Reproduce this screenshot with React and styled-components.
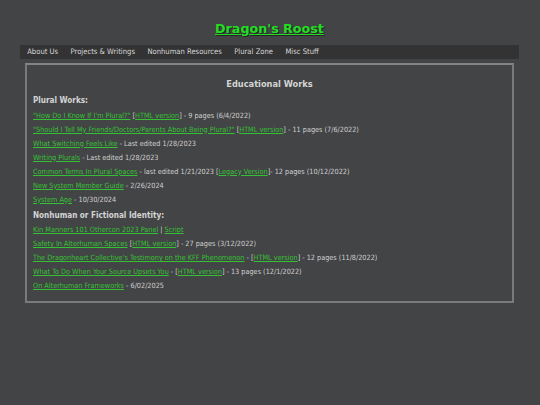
import styled, { createGlobalStyle } from 'styled-components';

const GlobalStyle = createGlobalStyle`
  html, body {
    margin: 0;
    padding: 0;
    background-color: #434446;
  }
  body {
    font-family: "DejaVu Sans Condensed", "DejaVu Sans", Verdana, sans-serif;
    font-stretch: condensed;
    color: #cfcfcf;
  }
`;

const Page = styled.div`
  min-height: 405px;
  padding: 0 21px 0 20px;
  box-sizing: border-box;
`;

const Title = styled.h1`
  margin: 0;
  padding: 21px 0 8px;
  text-align: center;
  font-size: 12.7px;
  line-height: 16px;
  font-weight: bold;
  font-stretch: normal;
  font-family: "DejaVu Sans", Verdana, sans-serif;
  a {
    color: #22de22;
    text-decoration: underline;
    text-shadow: 1px 1px 0 #262626;
  }
`;

const NavBar = styled.nav`
  display: flex;
  align-items: center;
  height: 14px;
  padding: 0 1px;
  background-color: #333334;
`;

const NavItem = styled.a`
  padding: 0 6.2px;
  font-size: 7.6px;
  line-height: 14px;
  color: #d6d6d6;
  text-decoration: none;
`;

const Box = styled.section`
  margin: 4px 5px 0;
  border: 2px solid #7a7a7a;
  border-top-color: #858585;
  padding: 11px 6px 8px;
`;

const SectionTitle = styled.h2`
  margin: 0;
  text-align: center;
  font-size: 9.2px;
  line-height: 16px;
  font-weight: bold;
  color: #d4d4d4;
`;

const GroupTitle = styled.h3`
  margin: 0;
  font-size: 8.1px;
  line-height: 16.6px;
  font-weight: bold;
  color: #d4d4d4;
`;

const Row = styled.div`
  font-size: 7.25px;
  line-height: 14px;
  color: #d0d0d0;
  white-space: nowrap;
`;

const Link = styled.a`
  color: #34c234;
  text-decoration: underline;
`;

const pluralWorks = [
  [{ link: '"How Do I Know If I\'m Plural?"' }, ' [', { link: 'HTML version' }, '] - 9 pages (6/4/2022)'],
  [{ link: '"Should I Tell My Friends/Doctors/Parents About Being Plural?"' }, ' [', { link: 'HTML version' }, '] - 11 pages (7/6/2022)'],
  [{ link: 'What Switching Feels Like' }, ' - Last edited 1/28/2023'],
  [{ link: 'Writing Plurals' }, ' - Last edited 1/28/2023'],
  [{ link: 'Common Terms In Plural Spaces' }, ' - last edited 1/21/2023 [', { link: 'Legacy Version' }, ']- 12 pages (10/12/2022)'],
  [{ link: 'New System Member Guide' }, ' - 2/26/2024'],
  [{ link: 'System Age' }, ' - 10/30/2024'],
];

const nonhumanWorks = [
  [{ link: 'Kin Manners 101 Othercon 2023 Panel' }, ' | ', { link: 'Script' }],
  [{ link: 'Safety In Alterhuman Spaces' }, ' [', { link: 'HTML version' }, '] - 27 pages (3/12/2022)'],
  [{ link: "The Dragonheart Collective's Testimony on the KFF Phenomenon" }, ' - [', { link: 'HTML version' }, '] - 12 pages (11/8/2022)'],
  [{ link: 'What To Do When Your Source Upsets You' }, ' - [', { link: 'HTML version' }, '] - 13 pages (12/1/2022)'],
  [{ link: 'On Alterhuman Frameworks' }, ' - 6/02/2025'],
];

const navLinks = ['About Us', 'Projects & Writings', 'Nonhuman Resources', 'Plural Zone', 'Misc Stuff'];

function WorkRow({ parts }) {
  return (
    <Row>
      {parts.map((p, i) =>
        typeof p === 'string' ? <span key={i}>{p}</span> : <Link key={i} href='#'>{p.link}</Link>
      )}
    </Row>
  );
}

function App() {
  return (
    <Page>
      <GlobalStyle />
      <Title>
        <a href='#'>Dragon's Roost</a>
      </Title>
      <NavBar>
        {navLinks.map((n) => (
          <NavItem key={n} href='#'>
            {n}
          </NavItem>
        ))}
      </NavBar>
      <Box>
        <SectionTitle>Educational Works</SectionTitle>
        <GroupTitle>Plural Works:</GroupTitle>
        {pluralWorks.map((parts, i) => (
          <WorkRow key={i} parts={parts} />
        ))}
        <GroupTitle>Nonhuman or Fictional Identity:</GroupTitle>
        {nonhumanWorks.map((parts, i) => (
          <WorkRow key={i} parts={parts} />
        ))}
      </Box>
    </Page>
  );
}

export default App;
